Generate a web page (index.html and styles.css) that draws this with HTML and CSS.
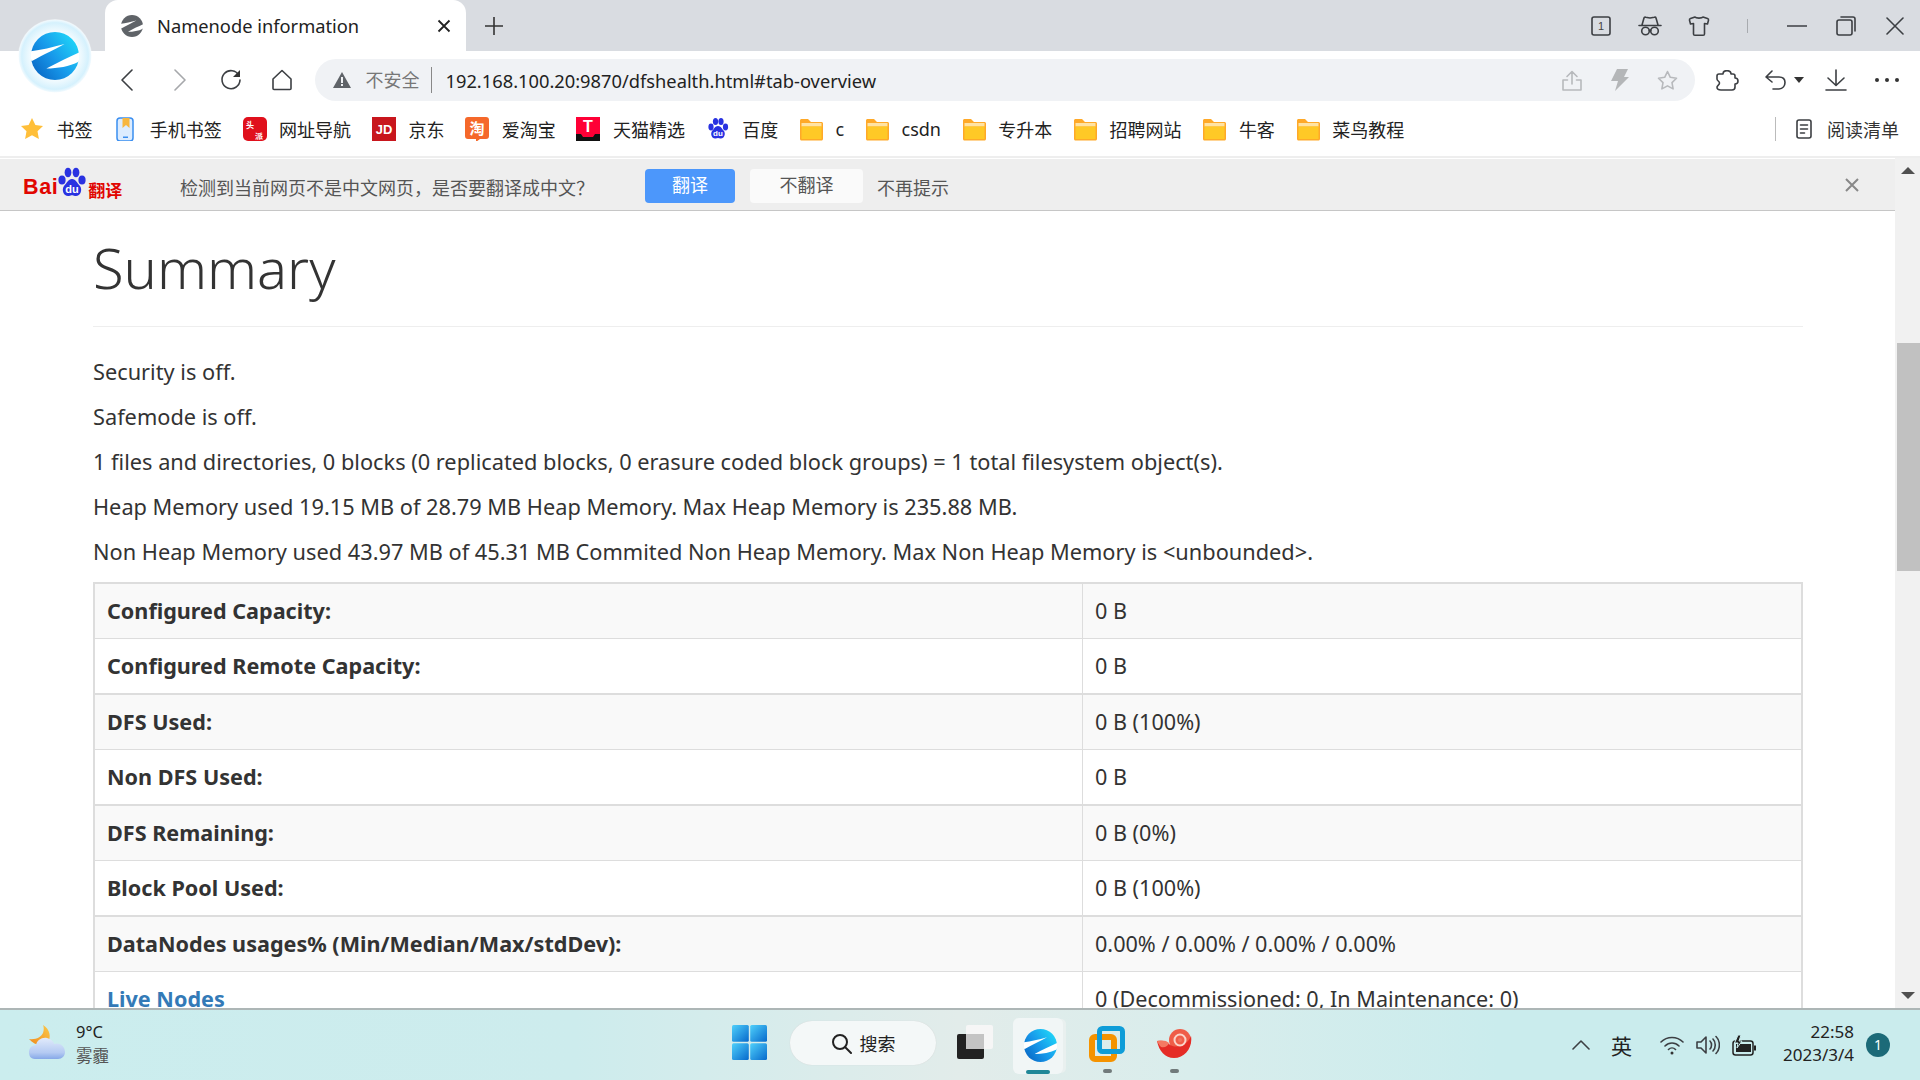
FILE: index.html
```html
<!DOCTYPE html>
<html lang="zh-CN">
<head>
  <meta charset="UTF-8">
  <title>Namenode information</title>
  <link rel="stylesheet" href="styles.css">
</head>
<body>
  <svg class="defs" width="0" height="0">
    <defs>
      <linearGradient id="edgeBlue" x1="0.95" y1="0.2" x2="0.1" y2="0.85">
        <stop offset="0" stop-color="#1fd4f8"/>
        <stop offset="0.55" stop-color="#1798ea"/>
        <stop offset="1" stop-color="#0a6cc8"/>
      </linearGradient>
      <radialGradient id="halo" cx="0.5" cy="0.5" r="0.5">
        <stop offset="0.55" stop-color="#ffffff"/>
        <stop offset="0.9" stop-color="#d5f1fd"/>
        <stop offset="0.97" stop-color="#eef9fe"/>
        <stop offset="1" stop-color="#ffffff" stop-opacity="0.3"/>
      </radialGradient>
      <linearGradient id="winBlue" x1="0" y1="0" x2="1" y2="1">
        <stop offset="0" stop-color="#4fd0fb"/>
        <stop offset="1" stop-color="#0669cc"/>
      </linearGradient>
      <linearGradient id="cloud" x1="0" y1="0" x2="0" y2="1">
        <stop offset="0" stop-color="#e2ebfb"/>
        <stop offset="0.7" stop-color="#b4caf2"/>
        <stop offset="1" stop-color="#86a8e8"/>
      </linearGradient>
      <linearGradient id="moon" x1="1" y1="0" x2="0" y2="1">
        <stop offset="0" stop-color="#fbc94a"/>
        <stop offset="1" stop-color="#f08a1d"/>
      </linearGradient>
      <symbol id="slits" viewBox="0 0 100 100">
        <path fill="#fff" d="M-1 40C20 38 44 32 70 25C50 36 28 46 1 61C-1 54-1 46-1 40Z"/>
        <path fill="#fff" d="M101 42C80 52 58 62 32 76C56 76 80 72 99 62C101 56 101 50 101 42Z"/>
      </symbol>
      <symbol id="folder" viewBox="0 0 24 24">
        <path fill="#ffa928" d="M1 3.500C1 2.700 1.700 2 2.500 2H9l3 3h10.500c.8 0 1.500.7 1.500 1.500V22c0 .8-.7 1.500-1.500 1.500h-20C1.700 23.500 1 22.800 1 22Z"/>
        <rect x="2.500" y="6" width="20" height="3.500" fill="#ffe3a3"/>
        <rect x="2.500" y="9.500" width="20" height="12.500" fill="#ffc926"/>
      </symbol>
    </defs>
  </svg>

  <svg class="big-logo" viewBox="0 0 76 80">
    <circle cx="37" cy="38" r="37" fill="url(#halo)"/>
    <circle cx="37" cy="38" r="24" fill="url(#edgeBlue)"/>
    <use href="#slits" x="13" y="14" width="48" height="48"/>
  </svg>

  <header class="tabstrip">
    <div class="tab">
      <svg class="tab-fav" viewBox="0 0 100 100"><circle cx="50" cy="50" r="50" fill="#5f6368"/><use href="#slits"/></svg>
      <span class="tab-title">Namenode information</span>
      <svg class="tab-close" viewBox="0 0 14 14"><path d="M1.500 1.500l11 11M12.500 1.500l-11 11"/></svg>
    </div>
    <svg class="tab-new" viewBox="0 0 20 20"><path d="M10 1v18M1 10h18"/></svg>
    <div class="win-controls">
      <span class="slot"><svg class="ico" width="22" height="22" viewBox="0 0 22 22"><rect x="2" y="2" width="18" height="18" rx="2"/><text x="11" y="15" class="tab-count">1</text></svg></span>
      <span class="slot"><svg class="ico" width="24" height="22" viewBox="0 0 24 22"><path d="M1 10.500h22M4 10l2-7c.2-.7 1-1 1.700-.8L12 3l4.300-.8c.7-.2 1.500.1 1.700.8l2 7"/><circle cx="7.500" cy="16" r="3.800"/><circle cx="16.500" cy="16" r="3.800"/><path d="M11.300 15.500c.5-.4 1-.4 1.400 0"/></svg></span>
      <span class="slot"><svg class="ico" width="22" height="22" viewBox="0 0 22 22"><path d="M7 2c1 1.500 7 1.500 8 0l4.500 1.500c.8.300 1.200 1 1 1.800L19.500 9 16.500 8.500V19c0 .8-.5 1.300-1.300 1.300H6.800C6 20.300 5.500 19.800 5.500 19V8.500L2.500 9 1.500 5.300c-.2-.8.200-1.500 1-1.800Z"/></svg></span>
      <span class="slot"><i class="win-sep"></i></span>
      <span class="slot"><svg class="ico" width="20" height="20" viewBox="0 0 20 20"><path d="M0 10h20"/></svg></span>
      <span class="slot"><svg class="ico" width="20" height="20" viewBox="0 0 20 20"><rect x="1" y="4" width="15" height="15" rx="2"/><path d="M5 1h12c1.200 0 2 .8 2 2v12"/></svg></span>
      <span class="slot"><svg class="ico" width="18" height="18" viewBox="0 0 18 18"><path d="M1 1l16 16M17 1L1 17"/></svg></span>
    </div>
  </header>

  <div class="toolbar">
    <span class="nav-slot back-slot"><svg class="ico" width="12" height="22" viewBox="0 0 12 22"><path d="M11 1L1 11l10 10"/></svg></span>
    <span class="nav-slot"><svg class="ico ico-off" width="12" height="22" viewBox="0 0 12 22"><path d="M1 1l10 10L1 21"/></svg></span>
    <span class="nav-slot"><svg class="ico" width="22" height="22" viewBox="0 0 22 22"><path d="M19 6.500A9 9 0 1 0 20 11"/><path class="solid" d="M20 1v7h-7Z"/></svg></span>
    <span class="nav-slot"><svg class="ico" width="22" height="22" viewBox="0 0 22 22"><path d="M11 1.500L2 10v9.500c0 .6.500 1 1 1h16c.5 0 1-.4 1-1V10Z"/></svg></span>
    <div class="address">
      <svg class="warn" viewBox="0 0 18 16"><path d="M9 0l9 16H0Z" fill="#5f6368"/><path d="M8 5h2v6H8zM8 12h2v2H8z" fill="#f0f2f5"/></svg>
      <span class="insecure">不安全</span>
      <span class="addr-url">192.168.100.20:9870/dfshealth.html#tab-overview</span>
      <div class="addr-tools">
        <span class="addr-slot"><svg class="ico ico-light" width="20" height="21" viewBox="0 0 20 21"><path d="M10 14V2M5 6.500L10 1.500l5 5M5.500 10H1v10h18V10h-4.500"/></svg></span>
        <span class="addr-slot"><svg width="18" height="22" viewBox="0 0 18 22"><path fill="#b4b6b8" d="M6 0h11l-4 8h5L4 22l3-10H0Z"/></svg></span>
        <span class="addr-slot"><svg class="ico ico-light" width="21" height="20" viewBox="0 0 21 20"><path d="M10.500 1.500l2.800 5.800 6.200.9-4.500 4.400 1.100 6.300-5.600-3-5.600 3 1.100-6.300L1.500 8.200l6.200-.9Z"/></svg></span>
      </div>
    </div>
    <span class="tool-slot puzzle-slot"><svg class="ico" width="23" height="21" viewBox="0 0 23 21"><path d="M7 4C7 1 9 .7 11 .7c2 0 4 .8 4 3.300h2c1.500 0 2 1 2 2v2c2 0 3 1.500 3 3 0 2-1 3-3 3v3c0 2-1 3-3 3H5c-3 0-4-1-4-3 0-1.500 2.500-2 2.500-4S1 11 1 9V6c0-1 1-2 2-2Z"/></svg></span>
    <span class="tool-slot undo-slot"><svg class="ico" width="22" height="20" viewBox="0 0 22 20"><path d="M7 1L1 7l6 5M1 7h13c4 0 6 2.500 6 5.500S18 19 14 19H8"/></svg><i class="undo-caret"></i></span>
    <span class="tool-slot dl-slot"><svg class="ico" width="22" height="22" viewBox="0 0 22 22"><path d="M11 1v15M3 9l8 7.500L19 9M1 21h20"/></svg></span>
    <span class="tool-slot more-slot"><i class="dot"></i><i class="dot"></i><i class="dot"></i></span>
  </div>

  <nav class="bookmarks">
    <a class="bm"><svg viewBox="0 0 24 24"><path fill="#ffbf3a" d="M12 1l3.400 7 7.600 1-5.500 5.300 1.400 7.700-6.900-3.700L5.100 22l1.400-7.700L1 9l7.600-1Z"/></svg>书签</a>
    <a class="bm"><svg viewBox="0 0 24 24"><rect x="4" y="1" width="16" height="23" rx="3" fill="#dcecff" stroke="#3a8ef0" stroke-width="1.500"/><path d="M9.500 1h7v10l-3.500-3-3.500 3Z" fill="#f7b63e"/><rect x="10" y="19.500" width="5" height="1.500" fill="#3a8ef0"/></svg>手机书签</a>
    <a class="bm"><svg viewBox="0 0 24 24"><rect width="24" height="24" rx="5" fill="#e0101c"/><text x="7" y="11" class="bm-glyph" font-size="8">头</text><text x="16" y="22" class="bm-glyph" font-size="8">派</text></svg>网址导航</a>
    <a class="bm"><svg viewBox="0 0 24 24"><rect width="24" height="24" fill="#c8161d"/><text x="12" y="17" class="bm-glyph bm-latin" font-size="13">JD</text></svg>京东</a>
    <a class="bm"><svg viewBox="0 0 24 24"><path fill="#f5682a" d="M3 0h18c2 0 3 1 3 3v16c0 2-1 3-3 3h-6l-4 3v-3H3c-2 0-3-1-3-3V3c0-2 1-3 3-3Z"/><text x="12" y="17" class="bm-glyph" font-size="15">淘</text></svg>爱淘宝</a>
    <a class="bm"><svg viewBox="0 0 24 24"><rect width="24" height="24" fill="#ff0036"/><path d="M0 17h5l2 3h10l2-3h5v7H0Z" fill="#111"/><text x="12" y="15" class="bm-glyph bm-latin" font-size="16">T</text></svg>天猫精选</a>
    <a class="bm"><svg viewBox="0 0 24 24"><g fill="#2932e1"><ellipse cx="5" cy="10" rx="2.600" ry="3.400"/><ellipse cx="9.500" cy="4.500" rx="2.600" ry="3.500"/><ellipse cx="15" cy="4.500" rx="2.600" ry="3.500"/><ellipse cx="19.500" cy="10" rx="2.600" ry="3.400"/><path d="M12 9c3 0 4 3 6 5 2 3 0 8-3.500 7.500-1-.2-1.800-.5-2.500-.5s-1.500.3-2.500.5C6 22 4 17 6 14c2-2 3-5 6-5Z"/></g><text x="12" y="19" class="bm-glyph bm-latin" font-size="8">du</text></svg>百度</a>
    <a class="bm"><svg viewBox="0 0 24 24"><use href="#folder"/></svg>c</a>
    <a class="bm"><svg viewBox="0 0 24 24"><use href="#folder"/></svg>csdn</a>
    <a class="bm"><svg viewBox="0 0 24 24"><use href="#folder"/></svg>专升本</a>
    <a class="bm"><svg viewBox="0 0 24 24"><use href="#folder"/></svg>招聘网站</a>
    <a class="bm"><svg viewBox="0 0 24 24"><use href="#folder"/></svg>牛客</a>
    <a class="bm"><svg viewBox="0 0 24 24"><use href="#folder"/></svg>菜鸟教程</a>
    <a class="reading"><svg class="ico" width="16" height="20" viewBox="0 0 16 20"><rect x="1" y="1" width="14" height="18" rx="2"/><path d="M4.500 6h7M4.500 10h7M4.500 14h4"/></svg>阅读清单</a>
  </nav>

  <div class="viewport">
    <div class="page-col">
      <div class="infobar">
        <div class="baidu">
          <span class="baidu-bai">Bai</span>
          <svg class="baidu-paw" viewBox="0 0 30 32"><g fill="#2932e1"><ellipse cx="5" cy="13" rx="3.600" ry="4.500"/><ellipse cx="11" cy="5.500" rx="3.400" ry="4.800"/><ellipse cx="19" cy="5.500" rx="3.400" ry="4.800"/><ellipse cx="25" cy="13" rx="3.600" ry="4.500"/><path d="M15 12c4 0 5 4 8 7 3 4 0 11-5 10-1.500-.3-2-.7-3-.7s-1.500.4-3 .7c-5 1-8-6-5-10 3-3 4-7 8-7Z"/></g><text x="15" y="26" class="bm-glyph bm-latin" font-size="11">du</text></svg>
          <span class="baidu-fy">翻译</span>
        </div>
        <span class="info-msg">检测到当前网页不是中文网页，是否要翻译成中文？</span>
        <span class="info-btn info-btn-primary">翻译</span>
        <span class="info-btn">不翻译</span>
        <span class="info-link">不再提示</span>
        <svg class="info-close" viewBox="0 0 14 14"><path d="M1 1l12 12M13 1L1 13"/></svg>
      </div>

      <main class="content">
        <h1 class="page-title">Summary</h1>
        <p>Security is off.</p>
        <p>Safemode is off.</p>
        <p>1 files and directories, 0 blocks (0 replicated blocks, 0 erasure coded block groups) = 1 total filesystem object(s).</p>
        <p>Heap Memory used 19.15 MB of 28.79 MB Heap Memory. Max Heap Memory is 235.88 MB.</p>
        <p>Non Heap Memory used 43.97 MB of 45.31 MB Commited Non Heap Memory. Max Non Heap Memory is &lt;unbounded&gt;.</p>
        <table class="summary">
          <tr class="odd"><th>Configured Capacity:</th><td>0 B</td></tr>
          <tr><th>Configured Remote Capacity:</th><td>0 B</td></tr>
          <tr class="odd"><th>DFS Used:</th><td>0 B (100%)</td></tr>
          <tr><th>Non DFS Used:</th><td>0 B</td></tr>
          <tr class="odd"><th>DFS Remaining:</th><td>0 B (0%)</td></tr>
          <tr><th>Block Pool Used:</th><td>0 B (100%)</td></tr>
          <tr class="odd"><th>DataNodes usages% (Min/Median/Max/stdDev):</th><td>0.00% / 0.00% / 0.00% / 0.00%</td></tr>
          <tr><th><a href="#">Live Nodes</a></th><td>0 (Decommissioned: 0, In Maintenance: 0)</td></tr>
        </table>
      </main>
    </div>
    <div class="scrollbar">
      <i class="arrow-up"></i>
      <div class="thumb"></div>
      <i class="arrow-down"></i>
    </div>
  </div>

  <footer class="taskbar">
    <div class="weather">
      <svg class="weather-ico" width="36" height="34" viewBox="0 0 36 34">
        <path fill="url(#moon)" d="M14 0C21 4 23 13 18 18C13 22 5 20 0 14C7 15 12 12 14 8C15 5 15 2 14 0Z"/>
        <path fill="url(#cloud)" d="M6 34C1 34 0 30 0 27C0 23 3 20 7 20C8 15 13 12 18 13C22 14 25 17 25 19C29 17 36 20 36 27C36 31 33 34 29 34Z"/>
      </svg>
      <div class="weather-text"><span class="temp">9°C</span><span class="cond">雾霾</span></div>
    </div>
    <div class="task-center">
      <svg class="win-logo" viewBox="0 0 35 35">
        <rect width="16.800" height="16.800" rx="1.500" fill="url(#winBlue)"/><rect x="18.200" width="16.800" height="16.800" rx="1.500" fill="url(#winBlue)"/>
        <rect y="18.200" width="16.800" height="16.800" rx="1.500" fill="url(#winBlue)"/><rect x="18.200" y="18.200" width="16.800" height="16.800" rx="1.500" fill="url(#winBlue)"/>
      </svg>
      <div class="search-pill">
        <svg class="ico" width="21" height="21" viewBox="0 0 21 21"><circle cx="9" cy="9" r="7"/><path d="M14 14l6 6"/></svg>
        <span>搜索</span>
      </div>
      <svg class="task-view" viewBox="0 0 36 34">
        <rect x="9" width="27" height="24" rx="2" fill="#f6f6f6"/>
        <rect y="9" width="27" height="25" rx="2" fill="#222"/>
        <rect x="9" y="9" width="18" height="15" fill="#c4c4c4"/>
      </svg>
      <div class="task-tile">
        <svg class="edge-task" viewBox="0 0 100 100"><circle cx="50" cy="50" r="50" fill="url(#edgeBlue)"/><use href="#slits"/></svg>
        <i class="task-active"></i>
      </div>
      <div class="task-app vm-app">
        <svg viewBox="0 0 36 36" width="36" height="36">
          <rect x="3" y="11" width="22" height="22" rx="3" fill="none" stroke="#f59300" stroke-width="6"/>
          <rect x="10.500" y="2.500" width="23" height="23" rx="3" fill="none" stroke="#0f9dd8" stroke-width="5"/>
        </svg>
        <i class="task-dot"></i>
      </div>
      <div class="task-app shell-app">
        <svg viewBox="0 0 35 29" width="35" height="29">
          <circle cx="23" cy="11" r="11" fill="#ef5d48"/>
          <path fill="#e52c26" d="M0 12c5-1 9 0 12 3 5 4 12 3 17-1 2-2 4-4 5-7 2 11-6 22-17 22C8 29 2 22 0 12Z"/>
          <path fill="#f47a63" d="M0 12c5-1 9-1 12 2-1 3-4 5-8 4-2-2-3-4-4-6Z"/>
          <circle cx="23" cy="11" r="5.500" fill="none" stroke="#fbd5ca" stroke-width="2"/>
          <circle cx="23" cy="11" r="2" fill="#f2735f"/>
        </svg>
        <i class="task-dot"></i>
      </div>
    </div>
    <div class="tray">
      <svg class="ico tray-chevron" width="18" height="10" viewBox="0 0 18 10"><path d="M1 9l8-8 8 8"/></svg>
      <span class="ime">英</span>
      <svg class="ico tray-wifi" width="24" height="20" viewBox="0 0 24 20"><path d="M1 7c6-6 16-6 22 0M5 11c4-4 10-4 14 0M8.500 14.500c2-2 5-2 7 0"/><circle class="solid" cx="12" cy="18" r="1.500"/></svg>
      <svg class="ico tray-sound" width="24" height="20" viewBox="0 0 24 20"><path d="M1 7v6h4l5 5V2L5 7ZM14 6c2 2 2 6 0 8M17 4c3 3 3 9 0 12M20 1.500c4.500 4.500 4.500 12.500 0 17"/></svg>
      <svg class="tray-batt" width="24" height="21" viewBox="0 0 24 21">
        <rect x="1" y="6" width="20" height="14" rx="2.500" fill="none" stroke="#222" stroke-width="1.500"/>
        <rect x="4" y="9" width="15" height="8" fill="#222"/>
        <rect x="22" y="10.500" width="2" height="5" fill="#222"/>
        <path d="M6 0L2.500 8H6l-1 5 5-7H7l2-6Z" fill="#222" stroke="#caeced"/>
      </svg>
      <div class="clock"><span>22:58</span><span>2023/3/4</span></div>
      <span class="notif">1</span>
    </div>
  </footer>
</body>
</html>
```

FILE: styles.css
```css
* { box-sizing: border-box; }
html, body { margin: 0; height: 100%; }
body {
  width: 1920px;
  height: 1080px;
  overflow: hidden;
  display: flex;
  flex-direction: column;
  position: relative;
  background: #fff;
  color: #222;
  font-family: "Noto Sans", "Noto Sans CJK SC", sans-serif;
}
.defs { position: absolute; }
i { display: block; }

.ico { fill: none; stroke: #3c3f43; stroke-width: 1.600; stroke-linecap: round; stroke-linejoin: round; }
.ico .solid { fill: #333; stroke: none; }
.ico .tab-count { fill: #444; stroke: none; font-size: 11px; text-anchor: middle; font-family: "Liberation Sans", sans-serif; }
.ico-off { stroke: #a6a8ab; }
.ico-light { stroke: #b7b9bc; }

/* tab strip */
.big-logo { position: absolute; left: 18px; top: 18px; width: 76px; height: 80px; }
.tabstrip { height: 51px; background: #d9dce1; display: flex; align-items: center; padding-left: 105px; flex: none; }
.tab { width: 361px; height: 51px; background: #fff; border-radius: 13px 13px 0 0; display: flex; align-items: center; padding-left: 16px; }
.tab-fav { width: 22px; height: 22px; }
.tab-title { margin-left: 14px; font-size: 18.300px; color: #222; flex: 1; }
.tab-close { width: 14px; height: 14px; margin-right: 15px; fill: none; stroke: #222; stroke-width: 1.800; }
.tab-new { width: 20px; height: 20px; margin-left: 18px; fill: none; stroke: #333; stroke-width: 1.600; }
.win-controls { margin-left: auto; margin-right: 1px; display: flex; }
.slot { width: 49px; height: 51px; display: flex; align-items: center; justify-content: center; }
.win-sep { width: 1px; height: 14px; background: #a8abaf; }

/* toolbar */
.toolbar { height: 50px; padding: 8px 0 0 103px; display: flex; flex: none; background: #fff; }
.nav-slot { width: 51px; display: flex; align-items: center; justify-content: center; }
.back-slot { padding-right: 4px; }
.address { width: 1380px; height: 42px; margin-left: 7.500px; background: #f0f2f5; border-radius: 21px; display: flex; align-items: center; padding-left: 18px; }
.warn { width: 18px; height: 16px; }
.insecure { margin-left: 15px; width: 66px; font-size: 18px; color: #777; border-right: 1.500px solid #888; line-height: 26px; }
.addr-url { margin-left: 14px; font-size: 18.300px; color: #222; }
.addr-tools { margin-left: auto; margin-right: 3px; display: flex; }
.addr-slot { width: 48px; display: flex; align-items: center; justify-content: center; }
.tool-slot { display: flex; align-items: center; justify-content: center; }
.puzzle-slot { width: 66px; }
.undo-slot { width: 51px; gap: 7px; padding-left: 4px; justify-content: flex-start; }
.undo-caret { border: 5px solid transparent; border-top: 6px solid #333; border-bottom: 0; }
.dl-slot { width: 48px; }
.more-slot { width: 54px; gap: 6px; }
.dot { width: 4px; height: 4px; background: #333; border-radius: 50%; }

/* bookmarks */
.bookmarks { height: 55px; flex: none; display: flex; align-items: center; gap: 20.800px; padding-left: 20px; background: #fff; }
.bm { display: flex; align-items: center; gap: 12.500px; font-size: 18px; color: #222; }
.bm svg { width: 24px; height: 24px; }
.bm-glyph { fill: #fff; text-anchor: middle; font-family: "Noto Sans CJK SC", sans-serif; font-weight: 700; }
.bm-latin { font-family: "Liberation Sans", sans-serif; }
.reading { margin-left: auto; width: 145px; height: 24px; border-left: 1px solid #bbb; display: flex; align-items: center; padding-left: 20px; gap: 15px; font-size: 18px; color: #333; }

/* page area */
.viewport { flex: 1; min-height: 0; display: flex; border-top: 2px solid #eee; }
.page-col { width: 1895px; display: flex; flex-direction: column; }
.infobar { height: 53px; flex: none; position: relative; display: flex; align-items: center; background: #eee; border-top: 1px solid #fff; border-bottom: 1.500px solid #c6c6c6; padding: 5px 0 0 23px; font-size: 18px; color: #555; }
.baidu { width: 157px; height: 32px; margin-top: -8px; display: flex; align-items: flex-end; line-height: 1; flex: none; }
.baidu-bai { font: 700 21.500px/24px "Liberation Sans", sans-serif; letter-spacing: .6px; color: #e10601; margin-right: -1px; }
.baidu-paw { width: 30px; height: 32px; }
.baidu-fy { font-size: 17px; font-weight: 700; color: #e10601; line-height: 20px; margin: 0 0 -2px 1px; }
.info-msg { width: 465px; flex: none; }
.info-btn { width: 113px; height: 34px; margin-top: -2px; margin-right: 14px; border-radius: 4px; background: #fafafa; text-align: center; line-height: 32px; }
.info-btn-primary { width: 90px; margin-right: 15px; background: #4c97fb; color: #fff; }
.info-close { width: 14px; height: 14px; margin-left: auto; margin-right: 36px; margin-top: -5px; fill: none; stroke: #888; stroke-width: 2; }

.content { flex: 1; min-height: 0; overflow: hidden; padding: 0 92px 0 93px; background: #fff; color: #333; font-size: 21.750px; line-height: 30px; }
.page-title { margin: 0 0 30px; height: 116px; padding-top: 21px; border-bottom: 1.500px solid #eee; font-size: 56px; line-height: 70px; font-weight: 300; }
.content p { margin: 0 0 15px; }
.summary { width: 1710px; margin-top: 0; border-collapse: separate; border-spacing: 0; border-right: 2px solid #ddd; border-left: 2px solid #ddd; table-layout: fixed; font-size: 21.600px; }
.summary th, .summary td { padding: 12px; text-align: left; border-top: 1px solid #ddd; }
.summary th { width: 988px; font-weight: 700; border-right: 1px solid #ddd; }
.summary .odd th, .summary .odd td { border-top-width: 2px; background: #f9f9f9; }
.summary a { color: #337ab7; text-decoration: none; }

.scrollbar { width: 25px; flex: none; background: #f1f1f1; display: flex; flex-direction: column; align-items: center; }
.arrow-up { margin-top: 9px; border: 7px solid transparent; border-bottom: 7px solid #505050; border-top: 0; }
.thumb { width: 23px; height: 228px; margin: 169px 0 0 2px; background: #c1c1c1; }
.arrow-down { margin-top: auto; margin-bottom: 9px; border: 7px solid transparent; border-top: 7px solid #505050; border-bottom: 0; }

/* taskbar */
.taskbar { height: 72px; flex: none; display: flex; position: relative; border-top: 2px solid #adb6b6; background: linear-gradient(90deg, #cbedee 0%, #cdeced 30%, #e2ecea 50%, #d9edec 62%, #caeced 78%, #caeced 100%); }
.weather { width: 700px; display: flex; align-items: flex-start; padding: 15px 0 0 29px; }
.weather-text { margin: -5px 0 0 11px; display: flex; flex-direction: column; font-size: 16.500px; line-height: 24px; }
.temp { color: #222; }
.cond { color: #555; }
.task-center { display: flex; align-items: center; height: 70px; }
.win-logo { width: 35px; height: 35px; margin-left: 32px; margin-top: -6px; }
.search-pill { width: 146px; height: 44px; margin-left: 23px; margin-top: -4px; border-radius: 22px; background: #f4f8f8; display: flex; align-items: center; justify-content: center; gap: 8px; font-size: 18px; color: #222; box-shadow: 0 0 1px #ccc; }
.search-pill .ico { stroke-width: 2; stroke: #222; }
.task-view { width: 36px; height: 34px; margin-left: 21px; margin-top: -6px; }
.task-tile { width: 50px; height: 56px; margin-left: 20px; margin-top: 2px; background: #f1f6f6; border-radius: 6px; box-shadow: 4px 0 0 -1px #e9f0ef; display: flex; flex-direction: column; align-items: center; padding-top: 11px; }
.edge-task { width: 33px; height: 33px; margin-left: 5px; }
.task-active { width: 24px; height: 4.500px; margin-top: auto; border-radius: 3px; background: #1f8797; }
.task-app { display: flex; flex-direction: column; align-items: center; align-self: flex-start; height: 63px; padding-top: 16px; }
.vm-app { margin-left: 26px; }
.shell-app { margin-left: 32px; padding-top: 19px; }
.task-dot { width: 9px; height: 4.500px; margin-top: auto; border-radius: 3px; background: #717a7b; }
.tray { margin-left: auto; display: flex; align-items: center; width: 352px; height: 70px; padding-left: 4px; }
.ime { margin-left: 21px; font-size: 21px; color: #222; width: 24px; }
.tray-wifi { margin-left: 25px; }
.tray-sound { margin-left: 12px; }
.tray-batt { margin-left: 12px; }
.clock { width: 98px; margin-top: -4px; display: flex; flex-direction: column; align-items: flex-end; font-size: 17px; line-height: 23px; color: #222; }
.notif { width: 24px; height: 24px; margin-left: 12px; border-radius: 50%; background: #1c6a78; color: #fff; font-size: 14px; line-height: 24px; text-align: center; }
```
